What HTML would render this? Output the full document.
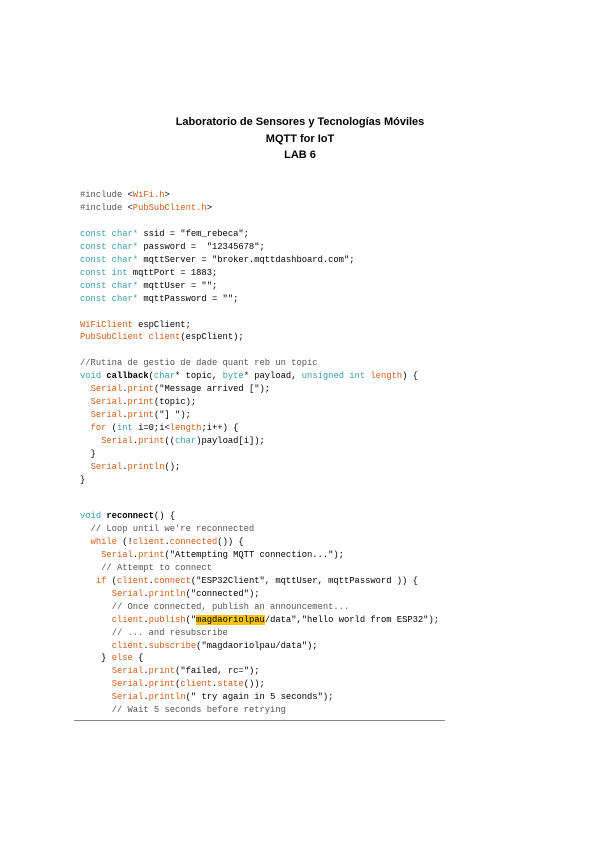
<!DOCTYPE html>
<html><head><meta charset="utf-8"><style>
html,body{margin:0;padding:0;background:#fff;width:600px;height:848px;overflow:hidden;position:relative}
.t{position:absolute;left:0;width:600px;text-align:center;font:bold 11px "Liberation Sans",sans-serif;color:#000}
pre{position:absolute;left:80px;margin:0;font:8.8px/12.95px "Liberation Mono",monospace;color:#000}
.k{color:#3a9ea5}.o{color:#d35e1a}.c{color:#555}.h{background:#f7c300}
.line{position:absolute;left:74px;top:720px;width:371px;height:1px;background:#888}
</style></head><body>
<div class="t" style="top:116px">Laboratorio de Sensores y Tecnologías Móviles</div>
<div class="t" style="top:133px">MQTT for IoT</div>
<div class="t" style="top:149px">LAB 6</div>
<pre style="top:189px"><span class="c">#include</span> &lt;<span class="o">WiFi.h</span>&gt;
<span class="c">#include</span> &lt;<span class="o">PubSubClient.h</span>&gt;

<span class="k">const char*</span> ssid = "fem_rebeca";
<span class="k">const char*</span> password =  "12345678";
<span class="k">const char*</span> mqttServer = "broker.mqttdashboard.com";
<span class="k">const int</span> mqttPort = 1883;
<span class="k">const char*</span> mqttUser = "";
<span class="k">const char*</span> mqttPassword = "";

<span class="o">WiFiClient</span> espClient;
<span class="o">PubSubClient</span> <span class="o">client</span>(espClient);

<span class="c">//Rutina de gestio de dade quant reb un topic</span>
<span class="k">void</span> <b>callback</b>(<span class="k">char</span>* topic, <span class="k">byte</span>* payload, <span class="k">unsigned int</span> <span class="o">length</span>) {
  <span class="o">Serial</span>.<span class="o">print</span>("Message arrived [");
  <span class="o">Serial</span>.<span class="o">print</span>(topic);
  <span class="o">Serial</span>.<span class="o">print</span>("] ");
  <span class="o">for</span> (<span class="k">int</span> i=0;i&lt;<span class="o">length</span>;i++) {
    <span class="o">Serial</span>.<span class="o">print</span>((<span class="k">char</span>)payload[i]);
  }
  <span class="o">Serial</span>.<span class="o">println</span>();
}</pre>
<pre style="top:510px"><span class="k">void</span> <b>reconnect</b>() {
  <span class="c">// Loop until we're reconnected</span>
  <span class="o">while</span> (!<span class="o">client</span>.<span class="o">connected</span>()) {
    <span class="o">Serial</span>.<span class="o">print</span>("Attempting MQTT connection...");
    <span class="c">// Attempt to connect</span>
   <span class="o">if</span> (<span class="o">client</span>.<span class="o">connect</span>("ESP32Client", mqttUser, mqttPassword )) {
      <span class="o">Serial</span>.<span class="o">println</span>("connected");
      <span class="c">// Once connected, publish an announcement...</span>
      <span class="o">client</span>.<span class="o">publish</span>("<span class="h">magdaoriolpau</span>/data","hello world from ESP32");
      <span class="c">// ... and resubscribe</span>
      <span class="o">client</span>.<span class="o">subscribe</span>("magdaoriolpau/data");
    } <span class="o">else</span> {
      <span class="o">Serial</span>.<span class="o">print</span>("failed, rc=");
      <span class="o">Serial</span>.<span class="o">print</span>(<span class="o">client</span>.<span class="o">state</span>());
      <span class="o">Serial</span>.<span class="o">println</span>(" try again in 5 seconds");
      <span class="c">// Wait 5 seconds before retrying</span></pre>
<div class="line"></div>
</body></html>
